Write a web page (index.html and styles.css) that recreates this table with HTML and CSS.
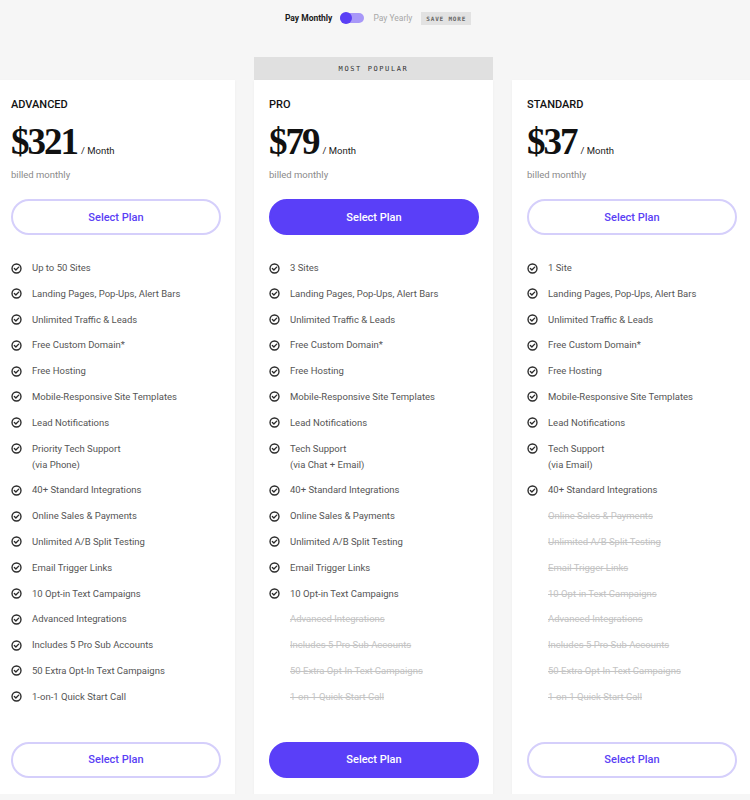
FILE: index.html
```html
<!DOCTYPE html>
<html>
<head>
<meta charset="utf-8">
<link rel="stylesheet" href="styles.css">
</head>
<body>
<svg width="0" height="0" style="position:absolute">
  <defs>
    <symbol id="chk" viewBox="0 0 12 12">
      <circle cx="6" cy="6" r="4.9" fill="none" stroke="#2b2b2b" stroke-width="1.5"/>
      <path d="M3.7 6.1 L5.3 7.6 L8.4 4.5" fill="none" stroke="#2b2b2b" stroke-width="1.5" stroke-linecap="round" stroke-linejoin="round"/>
    </symbol>
  </defs>
</svg>
<header class="billing">
  <span class="bill-on">Pay Monthly</span>
  <span class="switch"><span class="knob"></span></span>
  <span class="bill-off">Pay Yearly</span>
  <span class="save">SAVE MORE</span>
</header>

<main class="plans">
  <section class="col">
    <div class="card">
      <h2 class="name">ADVANCED</h2>
      <div class="price"><span class="amount">$321</span><span class="per">/ Month</span></div>
      <p class="billed">billed monthly</p>
      <button class="btn">Select Plan</button>
      <ul class="features">
        <li><svg class="ic"><use href="#chk"/></svg><span>Up to 50 Sites</span></li>
        <li><svg class="ic"><use href="#chk"/></svg><span>Landing Pages, Pop-Ups, Alert Bars</span></li>
        <li><svg class="ic"><use href="#chk"/></svg><span>Unlimited Traffic &amp; Leads</span></li>
        <li><svg class="ic"><use href="#chk"/></svg><span>Free Custom Domain*</span></li>
        <li><svg class="ic"><use href="#chk"/></svg><span>Free Hosting</span></li>
        <li><svg class="ic"><use href="#chk"/></svg><span>Mobile-Responsive Site Templates</span></li>
        <li><svg class="ic"><use href="#chk"/></svg><span>Lead Notifications</span></li>
        <li><svg class="ic"><use href="#chk"/></svg><span>Priority Tech Support<br>(via Phone)</span></li>
        <li><svg class="ic"><use href="#chk"/></svg><span>40+ Standard Integrations</span></li>
        <li><svg class="ic"><use href="#chk"/></svg><span>Online Sales &amp; Payments</span></li>
        <li><svg class="ic"><use href="#chk"/></svg><span>Unlimited A/B Split Testing</span></li>
        <li><svg class="ic"><use href="#chk"/></svg><span>Email Trigger Links</span></li>
        <li><svg class="ic"><use href="#chk"/></svg><span>10 Opt-in Text Campaigns</span></li>
        <li><svg class="ic"><use href="#chk"/></svg><span>Advanced Integrations</span></li>
        <li><svg class="ic"><use href="#chk"/></svg><span>Includes 5 Pro Sub Accounts</span></li>
        <li><svg class="ic"><use href="#chk"/></svg><span>50 Extra Opt-In Text Campaigns</span></li>
        <li><svg class="ic"><use href="#chk"/></svg><span>1-on-1 Quick Start Call</span></li>
      </ul>
      <button class="btn btn-bottom">Select Plan</button>
    </div>
  </section>

  <section class="col">
    <div class="banner">MOST POPULAR</div>
    <div class="card">
      <h2 class="name">PRO</h2>
      <div class="price"><span class="amount">$79</span><span class="per">/ Month</span></div>
      <p class="billed">billed monthly</p>
      <button class="btn btn-solid">Select Plan</button>
      <ul class="features">
        <li><svg class="ic"><use href="#chk"/></svg><span>3 Sites</span></li>
        <li><svg class="ic"><use href="#chk"/></svg><span>Landing Pages, Pop-Ups, Alert Bars</span></li>
        <li><svg class="ic"><use href="#chk"/></svg><span>Unlimited Traffic &amp; Leads</span></li>
        <li><svg class="ic"><use href="#chk"/></svg><span>Free Custom Domain*</span></li>
        <li><svg class="ic"><use href="#chk"/></svg><span>Free Hosting</span></li>
        <li><svg class="ic"><use href="#chk"/></svg><span>Mobile-Responsive Site Templates</span></li>
        <li><svg class="ic"><use href="#chk"/></svg><span>Lead Notifications</span></li>
        <li><svg class="ic"><use href="#chk"/></svg><span>Tech Support<br>(via Chat + Email)</span></li>
        <li><svg class="ic"><use href="#chk"/></svg><span>40+ Standard Integrations</span></li>
        <li><svg class="ic"><use href="#chk"/></svg><span>Online Sales &amp; Payments</span></li>
        <li><svg class="ic"><use href="#chk"/></svg><span>Unlimited A/B Split Testing</span></li>
        <li><svg class="ic"><use href="#chk"/></svg><span>Email Trigger Links</span></li>
        <li><svg class="ic"><use href="#chk"/></svg><span>10 Opt-in Text Campaigns</span></li>
        <li class="off"><span class="ic-gap"></span><span>Advanced Integrations</span></li>
        <li class="off"><span class="ic-gap"></span><span>Includes 5 Pro Sub Accounts</span></li>
        <li class="off"><span class="ic-gap"></span><span>50 Extra Opt-In Text Campaigns</span></li>
        <li class="off"><span class="ic-gap"></span><span>1-on-1 Quick Start Call</span></li>
      </ul>
      <button class="btn btn-solid btn-bottom">Select Plan</button>
    </div>
  </section>

  <section class="col">
    <div class="card">
      <h2 class="name">STANDARD</h2>
      <div class="price"><span class="amount">$37</span><span class="per">/ Month</span></div>
      <p class="billed">billed monthly</p>
      <button class="btn">Select Plan</button>
      <ul class="features">
        <li><svg class="ic"><use href="#chk"/></svg><span>1 Site</span></li>
        <li><svg class="ic"><use href="#chk"/></svg><span>Landing Pages, Pop-Ups, Alert Bars</span></li>
        <li><svg class="ic"><use href="#chk"/></svg><span>Unlimited Traffic &amp; Leads</span></li>
        <li><svg class="ic"><use href="#chk"/></svg><span>Free Custom Domain*</span></li>
        <li><svg class="ic"><use href="#chk"/></svg><span>Free Hosting</span></li>
        <li><svg class="ic"><use href="#chk"/></svg><span>Mobile-Responsive Site Templates</span></li>
        <li><svg class="ic"><use href="#chk"/></svg><span>Lead Notifications</span></li>
        <li><svg class="ic"><use href="#chk"/></svg><span>Tech Support<br>(via Email)</span></li>
        <li><svg class="ic"><use href="#chk"/></svg><span>40+ Standard Integrations</span></li>
        <li class="off"><span class="ic-gap"></span><span>Online Sales &amp; Payments</span></li>
        <li class="off"><span class="ic-gap"></span><span>Unlimited A/B Split Testing</span></li>
        <li class="off"><span class="ic-gap"></span><span>Email Trigger Links</span></li>
        <li class="off"><span class="ic-gap"></span><span>10 Opt-in Text Campaigns</span></li>
        <li class="off"><span class="ic-gap"></span><span>Advanced Integrations</span></li>
        <li class="off"><span class="ic-gap"></span><span>Includes 5 Pro Sub Accounts</span></li>
        <li class="off"><span class="ic-gap"></span><span>50 Extra Opt-In Text Campaigns</span></li>
        <li class="off"><span class="ic-gap"></span><span>1-on-1 Quick Start Call</span></li>
      </ul>
      <button class="btn btn-bottom">Select Plan</button>
    </div>
  </section>
</main>
</body>
</html>
```

FILE: styles.css
```css
* { box-sizing: border-box; }

html, body {
  margin: 0;
  padding: 0;
}

body {
  background: #f6f6f6;
  font-family: "Roboto", "Noto Sans", sans-serif;
  color: #222;
  overflow: hidden;
}

.billing {
  height: 36px;
  display: flex;
  align-items: center;
  justify-content: center;
  font-size: 8.5px;
  padding-left: 6px;
}

.bill-on {
  font-weight: 700;
  color: #1a1a1a;
}

.switch {
  width: 24px;
  height: 10px;
  border-radius: 5px;
  background: #a898f8;
  margin: 0 9px 0 8px;
  display: flex;
  align-items: center;
}

.knob {
  width: 12px;
  height: 12px;
  border-radius: 50%;
  background: #5a3ff5;
}

.bill-off {
  color: #a8a8a8;
}

.save {
  margin-left: 9px;
  background: #e2e2e2;
  color: #666;
  font-family: "DejaVu Sans Mono", monospace;
  font-size: 6px;
  font-weight: 700;
  letter-spacing: 0.8px;
  padding: 3px 5px;
}

.plans {
  margin: 21px 0 0 -4px;
  width: 755px;
  display: grid;
  grid-template-columns: 239px 239px 239px;
  column-gap: 19px;
  align-items: end;
}

.col {
  display: flex;
  flex-direction: column;
}

.banner {
  height: 23px;
  background: #e0e0e0;
  display: flex;
  align-items: center;
  justify-content: center;
  font-family: "DejaVu Sans Mono", monospace;
  font-size: 7px;
  letter-spacing: 1.6px;
  color: #333;
}

.card {
  background: #fff;
  padding: 18px 15px 16px;
  display: flex;
  flex-direction: column;
  box-shadow: 0 1px 3px rgba(0, 0, 0, 0.04);
}

.name {
  margin: 0;
  font-size: 11px;
  line-height: 14px;
  font-weight: 500;
  color: #111;
}

.price {
  margin-top: 10px;
  height: 40px;
  display: flex;
  align-items: baseline;
}

.amount {
  font-family: "Liberation Serif", "DejaVu Serif", serif;
  font-weight: 700;
  font-size: 37px;
  line-height: 40px;
  letter-spacing: -2px;
  color: #111;
}

.per {
  margin-left: 4px;
  font-size: 9.5px;
  color: #222;
}

.billed {
  margin: 6px 0 0;
  font-size: 9.5px;
  line-height: 14px;
  color: #8a8a8a;
}

.btn {
  margin-top: 17px;
  width: 210px;
  height: 36px;
  border-radius: 18px;
  border: 2px solid #d5cffb;
  background: #fff;
  color: #5a3ff5;
  font-family: "Roboto", "Noto Sans", sans-serif;
  font-size: 11px;
  font-weight: 500;
  padding: 0;
}

.btn-solid {
  background: #5a3ff8;
  border-color: #5a3ff8;
  color: #fff;
}

.btn-bottom {
  margin-top: 37px;
}

.features {
  list-style: none;
  margin: 25px 0 0;
  padding: 0;
  display: flex;
  flex-direction: column;
  gap: 9.8px;
}

.features li {
  display: flex;
  align-items: flex-start;
  font-size: 9.5px;
  line-height: 16px;
  color: #555;
}

.ic {
  width: 11px;
  height: 11px;
  flex: none;
  margin: 2.5px 10px 0 0;
}

.ic-gap {
  width: 11px;
  flex: none;
  margin-right: 10px;
}

.features li.off {
  color: #c4c4c4;
  text-decoration: line-through;
}
```
